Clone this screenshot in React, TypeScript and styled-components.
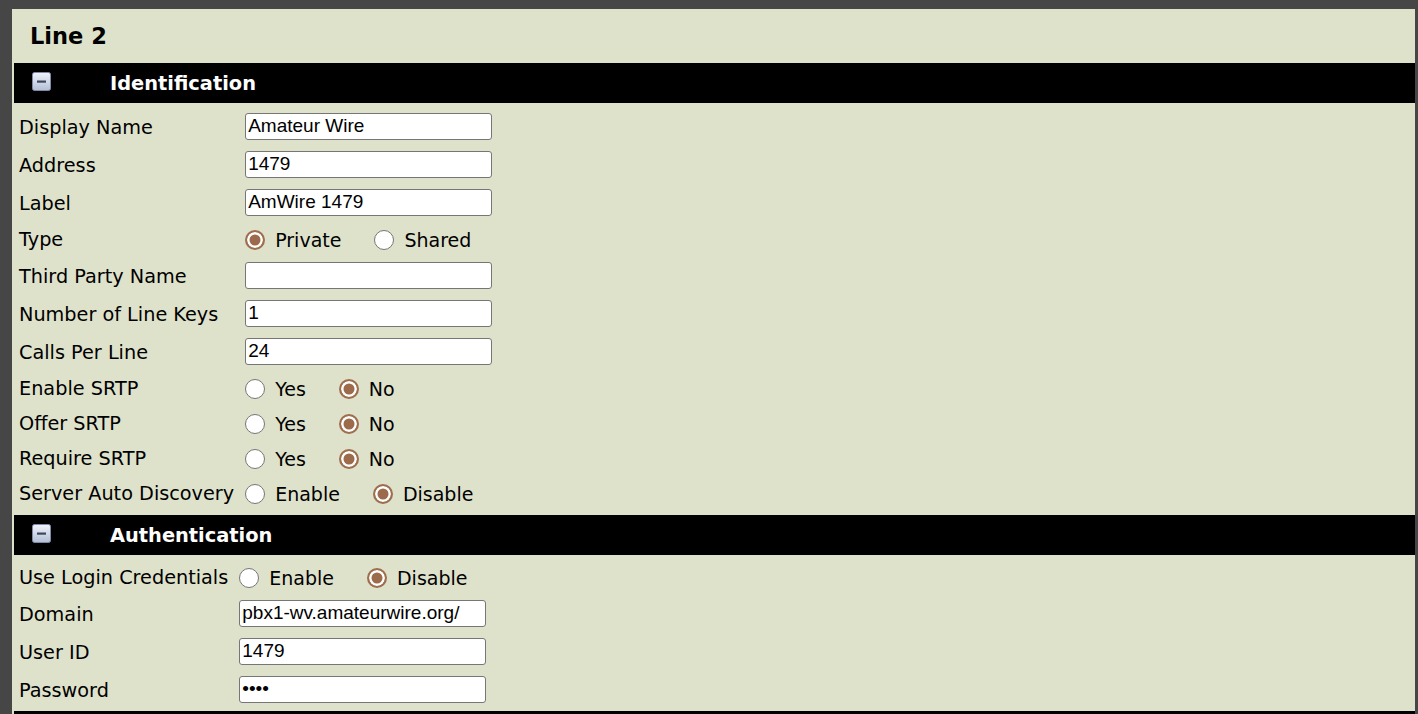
import React from "react";
import styled, {createGlobalStyle} from "styled-components";

const GlobalStyle = createGlobalStyle`
  html, body {
    margin: 0;
    padding: 0;
    background: #464646;
  }
  body {
    font-family: "DejaVu Sans", Verdana, sans-serif;
    overflow: hidden;
  }
`;

const Panel = styled.div`
  margin: 9px 3px 0 12px;
  padding: 0 0 200px 2px;
  background: #dfe2cb;
  min-height: 800px;
`;

const PageTitle = styled.h1`
  margin: 0;
  height: 54px;
  display: flex;
  align-items: center;
  padding-left: 16px;
  font-size: 22.5px;
  font-weight: bold;
  color: #000;
`;

const SectionBar = styled.div`
  height: 40px;
  background: #000;
  display: flex;
  align-items: center;
  padding-left: 18px;
`;

const SectionTitle = styled.span`
  margin-left: 59px;
  color: #fff;
  font-size: 19.4px;
  font-weight: bold;
`;

const FieldGrid = styled.div<{$padBottom: number}>`
  display: grid;
  grid-template-columns: max-content 1fr;
  column-gap: 11px;
  padding: 4px 0 ${p => p.$padBottom}px 5px;
`;

const FieldLabel = styled.div<{$h: number; $shift: number}>`
  height: ${p => p.$h}px;
  display: flex;
  align-items: center;
  padding-top: ${p => p.$shift}px;
  box-sizing: border-box;
  font-size: 19.25px;
  color: #000;
  white-space: nowrap;
`;

const FieldValue = styled.div<{$h: number; $shift: number}>`
  height: ${p => p.$h}px;
  display: flex;
  align-items: center;
  padding-top: ${p => p.$shift}px;
  box-sizing: border-box;
`;

const TextInput = styled.input`
  width: 247px;
  height: 27px;
  box-sizing: border-box;
  margin: 0;
  padding: 0 2px;
  border: 1px solid #767676;
  border-radius: 3px;
  background: #fff;
  color: #000;
  font-family: "Liberation Sans", Arial, sans-serif;
  font-size: 19px;
  outline: none;
`;

const Option = styled.label`
  display: inline-flex;
  align-items: center;
  margin-right: 33px;
  font-size: 19px;
  color: #000;
  cursor: pointer;
`;

const RadioInput = styled.input`
  appearance: none;
  margin: 0 10px 0 0;
  width: 20px;
  height: 20px;
  box-sizing: border-box;
  border-radius: 50%;
  border: 1.5px solid #767676;
  background: #fff;

  &:checked {
    border: 2px solid #9e6e4e;
    background: #9c6b4b;
    box-shadow: inset 0 0 0 2.5px #fff;
  }
`;

function CollapseIcon() {
  return (
    <svg width="19" height="19" viewBox="0 0 19 19" style={{marginBottom: 4}}>
      <defs>
        <linearGradient id="cg" x1="0" y1="0" x2="0" y2="1">
          <stop offset="0" stopColor="#f1f4fa" />
          <stop offset="1" stopColor="#b3bed6" />
        </linearGradient>
      </defs>
      <rect x="0.5" y="0.5" width="18" height="18" rx="2" fill="url(#cg)" stroke="#7d8aa8" />
      <rect x="5" y="8.5" width="9" height="2.2" fill="#3d4860" />
    </svg>
  );
}

type Field =
  | {kind: "text"; label: string; value: string; password?: boolean}
  | {kind: "radio"; label: string; name: string; options: string[]; checked: number};

const identification: Field[] = [
  {kind: "text", label: "Display Name", value: "Amateur Wire"},
  {kind: "text", label: "Address", value: "1479"},
  {kind: "text", label: "Label", value: "AmWire 1479"},
  {kind: "radio", label: "Type", name: "type", options: ["Private", "Shared"], checked: 0},
  {kind: "text", label: "Third Party Name", value: ""},
  {kind: "text", label: "Number of Line Keys", value: "1"},
  {kind: "text", label: "Calls Per Line", value: "24"},
  {kind: "radio", label: "Enable SRTP", name: "esrtp", options: ["Yes", "No"], checked: 1},
  {kind: "radio", label: "Offer SRTP", name: "osrtp", options: ["Yes", "No"], checked: 1},
  {kind: "radio", label: "Require SRTP", name: "rsrtp", options: ["Yes", "No"], checked: 1},
  {kind: "radio", label: "Server Auto Discovery", name: "sad", options: ["Enable", "Disable"], checked: 1},
];

const authentication: Field[] = [
  {kind: "radio", label: "Use Login Credentials", name: "ulc", options: ["Enable", "Disable"], checked: 1},
  {kind: "text", label: "Domain", value: "pbx1-wv.amateurwire.org/"},
  {kind: "text", label: "User ID", value: "1479"},
  {kind: "text", label: "Password", value: "1479", password: true},
];

function FieldRow({field}: {field: Field}) {
  if (field.kind === "text") {
    return (
      <>
        <FieldLabel $h={38} $shift={3}>{field.label}</FieldLabel>
        <FieldValue $h={38} $shift={0}>
          <TextInput
            type={field.password ? "password" : "text"}
            defaultValue={field.value}
          />
        </FieldValue>
      </>
    );
  }
  return (
    <>
      <FieldLabel $h={35} $shift={2}>{field.label}</FieldLabel>
      <FieldValue $h={35} $shift={2}>
        {field.options.map((opt, i) => (
          <Option key={opt}>
            <RadioInput
              type="radio"
              name={field.name}
              defaultChecked={i === field.checked}
            />
            {opt}
          </Option>
        ))}
      </FieldValue>
    </>
  );
}

function Section({title, fields, padBottom}: {title: string; fields: Field[]; padBottom: number}) {
  return (
    <>
      <SectionBar>
        <CollapseIcon />
        <SectionTitle>{title}</SectionTitle>
      </SectionBar>
      <FieldGrid $padBottom={padBottom}>
        {fields.map(f => (
          <FieldRow key={f.label} field={f} />
        ))}
      </FieldGrid>
    </>
  );
}

export default function App() {
  return (
    <>
      <GlobalStyle />
      <Panel>
        <PageTitle>Line 2</PageTitle>
        <Section title="Identification" fields={identification} padBottom={5} />
        <Section title="Authentication" fields={authentication} padBottom={3} />
        <SectionBar />
      </Panel>
    </>
  );
}
